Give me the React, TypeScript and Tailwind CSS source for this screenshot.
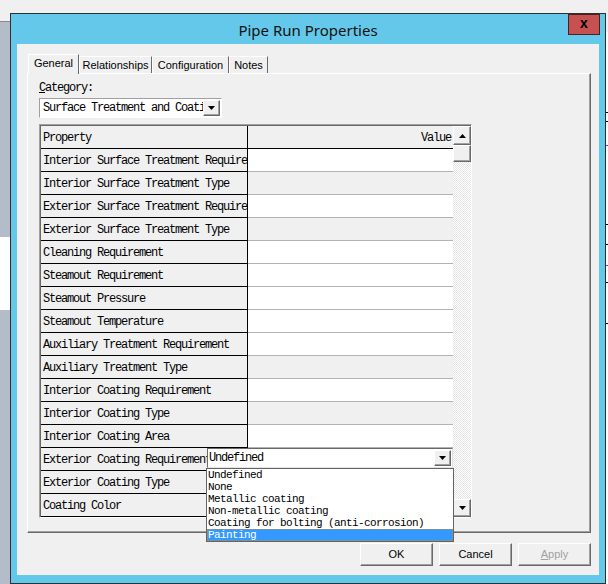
import React from "react";

const mono =
  "font-['Liberation_Mono','DejaVu_Sans_Mono',monospace] text-[12px] tracking-[-1.2px] text-black";
const monoSmall =
  "font-['Liberation_Mono','DejaVu_Sans_Mono',monospace] text-[11px] tracking-[-0.6px] text-black";
const ui = "font-['Liberation_Sans',Arial,sans-serif] text-[11px] text-black";

// classic raised 3d look used by buttons and scroll arrows
const raised =
  "bg-[#f0f0f0] border border-t-white border-l-white border-r-[#696969] border-b-[#696969] shadow-[inset_-1px_-1px_0_#a0a0a0]";

const rows: { name: string; readOnly?: boolean }[] = [
  { name: "Interior Surface Treatment Requirement" },
  { name: "Interior Surface Treatment Type", readOnly: true },
  { name: "Exterior Surface Treatment Requirement" },
  { name: "Exterior Surface Treatment Type", readOnly: true },
  { name: "Cleaning Requirement" },
  { name: "Steamout Requirement" },
  { name: "Steamout Pressure" },
  { name: "Steamout Temperature" },
  { name: "Auxiliary Treatment Requirement" },
  { name: "Auxiliary Treatment Type", readOnly: true },
  { name: "Interior Coating Requirement" },
  { name: "Interior Coating Type", readOnly: true },
  { name: "Interior Coating Area" },
  { name: "Exterior Coating Requirement" },
  { name: "Exterior Coating Type", readOnly: true },
  { name: "Coating Color" },
];

const options = [
  "Undefined",
  "None",
  "Metallic coating",
  "Non-metallic coating",
  "Coating for bolting (anti-corrosion)",
  "Painting",
];

function Arrow({ up = false }: { up?: boolean }) {
  return (
    <svg width="7" height="4" viewBox="0 0 7 4">
      <polygon points={up ? "3.5,0 7,4 0,4" : "0,0 7,0 3.5,4"} fill="#000" />
    </svg>
  );
}

function Tab({ label, active = false, w }: { label: string; active?: boolean; w: string }) {
  return (
    <div
      className={`${w} ${ui} flex items-center justify-center border-t border-l border-r border-t-white border-l-white border-r-[#696969] bg-[#f0f0f0] ${
        active ? "h-[20px] -mb-[1px] relative z-10 pb-[2px]" : "h-[17px]"
      }`}
    >
      {label}
    </div>
  );
}

function Row({ name, readOnly }: { name: string; readOnly?: boolean }) {
  return (
    <div className="flex h-[23px]">
      <div
        className={`w-[207px] shrink-0 border-r border-b border-black bg-[#f0f0f0] pl-[2px] pt-[1px] flex items-center overflow-hidden whitespace-nowrap ${mono}`}
      >
        {name}
      </div>
      <div
        className={`w-[205px] shrink-0 border-b border-[#b4b4b4] ${readOnly ? "bg-[#f0f0f0]" : "bg-white"}`}
      />
    </div>
  );
}

function PropertyGrid() {
  return (
    <div className="relative mt-[6px] w-[433px] border border-t-[#a0a0a0] border-l-[#a0a0a0] border-r-white border-b-white">
      <div className="flex border-t border-l border-[#696969]">
        <div className="w-[412px]">
          <div className="flex h-[23px]">
            <div className={`w-[207px] border-r border-b border-black bg-[#f0f0f0] pl-[2px] pt-[1px] flex items-center ${mono}`}>
              Property
            </div>
            <div className={`w-[205px] border-b border-black bg-[#f0f0f0] pr-[2px] pt-[1px] flex items-center justify-end ${mono}`}>
              Value
            </div>
          </div>
          {rows.map((r) => (
            <Row key={r.name} name={r.name} readOnly={r.readOnly} />
          ))}
        </div>
        <div className="w-[18px] flex flex-col bg-[repeating-conic-gradient(#e4e4e4_0_25%,#ffffff_0_50%)] bg-[length:2px_2px]">
          <div className={`h-[19px] ${raised} flex items-center justify-center`}>
            <Arrow up />
          </div>
          <div className={`h-[17px] ${raised}`} />
          <div className="flex-1" />
          <div className={`h-[18px] ${raised} flex items-center justify-center`}>
            <Arrow />
          </div>
        </div>
      </div>

      {/* in-place combo editor on the active row */}
      <div className="absolute left-[167px] top-[323px] w-[246px] h-[20px] bg-white border border-t-[#696969] border-l-[#696969] border-r-[#e3e3e3] border-b-[#e3e3e3] flex items-center">
        <span className={`${mono} pl-[1px] flex-1`}>Undefined</span>
        <div className={`w-[17px] h-[16px] ${raised} flex items-center justify-center mr-[1px]`}>
          <Arrow />
        </div>
      </div>

      {/* open drop-down list */}
      <div className="absolute left-[166px] top-[343px] w-[248px] border border-[#646464] bg-white z-20">
        {options.map((o) => (
          <div
            key={o}
            className={`h-[12px] leading-[12px] px-[1px] whitespace-nowrap ${monoSmall} ${
              o === "Painting"
                ? "bg-[#3399ff] text-white outline-1 outline-dotted outline-[#c08a3e] -outline-offset-1"
                : ""
            }`}
          >
            {o}
          </div>
        ))}
      </div>
    </div>
  );
}

export default function App() {
  return (
    <div className="relative w-[608px] h-[584px] overflow-hidden bg-[#f0f0f0] flex">
      {/* desktop behind the dialog */}
      <div className="w-[10px] flex flex-col">
        <div className="h-[21px] bg-[#f0f0f0]" />
        <div className="h-[1px] bg-[#8a8a8a]" />
        <div className="h-[215px] bg-[#b4bcc9]" />
        <div className="h-[73px] bg-white" />
        <div className="flex-1 bg-[#b4bcc9]" />
      </div>
      <div className="flex-1" />
      <div className="w-[2px] flex flex-col bg-white">
        <div className="h-[32px] bg-[#f0f0f0]" />
        <div className="h-[1px] bg-black mt-[80px]" />
        <div className="h-[1px] bg-black mt-[8px]" />
        <div className="h-[1px] bg-[#c020c0] mt-[23px]" />
        <div className="h-[1px] bg-black mt-[78px]" />
        <div className="h-[1px] bg-black mt-[19px]" />
        <div className="h-[1px] bg-[#c020c0] mt-[20px]" />
        <div className="h-[1px] bg-black mt-[16px]" />
        <div className="h-[1px] bg-black mt-[40px]" />
      </div>

      {/* dialog window */}
      <div className="absolute left-[10px] top-[13px] w-[596px] h-[571px] border border-[#2f2f2f] bg-[#63c8ea] flex flex-col">
        <div className="relative h-[30px] flex items-center justify-center pt-[2px]">
          <span className="font-['Noto_Sans',sans-serif] text-[15px] text-[#111]">Pipe Run Properties</span>
          <div className="absolute right-[5px] top-0 w-[32px] h-[21px] bg-[#c75050] border border-[#4a2020] flex items-center justify-center">
            <span className="font-['Liberation_Sans',sans-serif] font-bold text-[14px] leading-none text-black -mt-[3px]">
              x
            </span>
          </div>
        </div>

        <div className="mx-[6px] h-[531px] bg-[#f0f0f0] flex flex-col">
          <div className="ml-[11px] mt-[10px] h-[19px] flex items-end">
            <Tab label="General" active w="w-[51px]" />
            <Tab label="Relationships" w="w-[73px]" />
            <Tab label="Configuration" w="w-[77px]" />
            <Tab label="Notes" w="w-[39px]" />
          </div>

          <div className="ml-[10px] w-[564px] h-[460px] border border-t-white border-l-white border-r-[#696969] border-b-[#696969] shadow-[inset_-1px_-1px_0_#a0a0a0] pl-[11px] flex flex-col">
            <div className={`${mono} mt-[8px] h-[12px] leading-[12px]`}>
              <span className="underline">C</span>ategory:
            </div>
            <div className="mt-[4px] w-[183px] h-[20px] bg-white border border-t-[#a0a0a0] border-l-[#a0a0a0] border-r-white border-b-white flex items-center">
              <span className={`${mono} pl-[3px] flex-1 overflow-hidden whitespace-nowrap`}>
                Surface Treatment and Coating
              </span>
              <div className={`w-[17px] h-[16px] shrink-0 ${raised} flex items-center justify-center mr-[1px]`}>
                <Arrow />
              </div>
            </div>
            <PropertyGrid />
          </div>

          <div className="mt-[10px] mr-[8px] flex justify-end gap-[6px]">
            <div className={`w-[73px] h-[23px] ${raised} ${ui} flex items-center justify-center`}>OK</div>
            <div className={`w-[73px] h-[23px] ${raised} ${ui} flex items-center justify-center`}>Cancel</div>
            <div className={`w-[73px] h-[23px] ${raised} ${ui} !text-[#a0a0a0] flex items-center justify-center`}>
              <span className="underline">A</span>pply
            </div>
          </div>
        </div>
      </div>
    </div>
  );
}
